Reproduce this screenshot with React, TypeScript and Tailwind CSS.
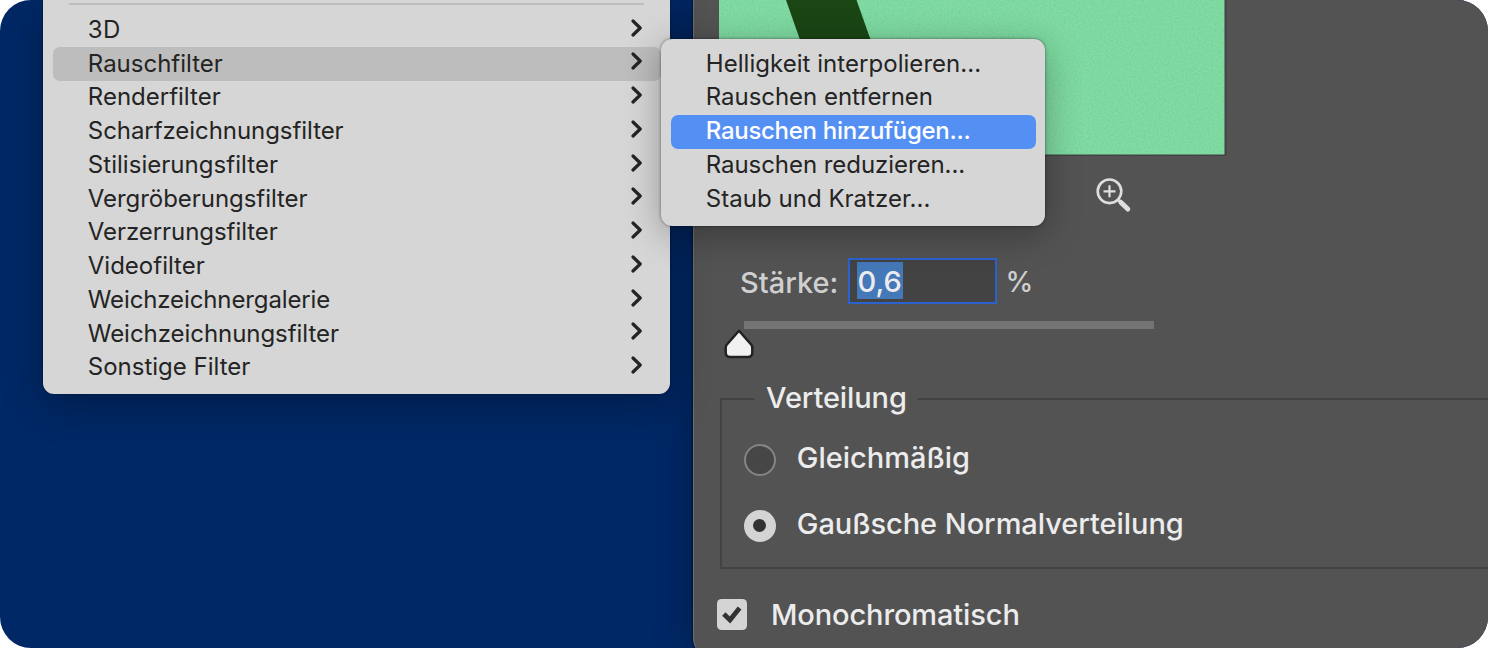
type MenuEntry = { label: string; tracking?: string };

const filterMenu: MenuEntry[] = [
  { label: "3D", tracking: "tracking-[0.4px]" },
  { label: "Rauschfilter" },
  { label: "Renderfilter" },
  { label: "Scharfzeichnungsfilter", tracking: "tracking-[-0.06px]" },
  { label: "Stilisierungsfilter", tracking: "tracking-[0.04px]" },
  { label: "Vergröberungsfilter", tracking: "tracking-[-0.05px]" },
  { label: "Verzerrungsfilter", tracking: "tracking-[-0.06px]" },
  { label: "Videofilter" },
  { label: "Weichzeichnergalerie", tracking: "tracking-[-0.12px]" },
  { label: "Weichzeichnungsfilter", tracking: "tracking-[-0.05px]" },
  { label: "Sonstige Filter" },
];

const noiseMenu: MenuEntry[] = [
  { label: "Helligkeit interpolieren...", tracking: "tracking-[0.04px]" },
  { label: "Rauschen entfernen", tracking: "tracking-[-0.04px]" },
  { label: "Rauschen hinzufügen...", tracking: "tracking-[-0.3px]" },
  { label: "Rauschen reduzieren...", tracking: "tracking-[-0.06px]" },
  { label: "Staub und Kratzer...", tracking: "tracking-[0.03px]" },
];

function Chevron() {
  return (
    <svg className="mb-[6px] h-[18px] w-[12px] shrink-0" viewBox="0 0 12 18" fill="none">
      <path d="M2 2L9.2 9L2 16" stroke="#242424" strokeWidth="3.2" strokeLinecap="round" strokeLinejoin="round" />
    </svg>
  );
}

function FilterMenu() {
  return (
    <nav className="relative z-10 h-[394px] w-[627px] shrink-0 rounded-b-[11px] bg-[#d6d6d6] px-[9.5px] pt-[3px] shadow-[0_10px_40px_rgba(0,0,0,0.3),0_0_2px_rgba(0,0,0,0.5)]">
      <div className="mx-[16.5px] h-[2px] bg-[#bebebe]" />
      <ul className="mt-[8.7px]">
        {filterMenu.map(({ label, tracking }) => (
          <li
            key={label}
            className={`flex h-[33.75px] items-center justify-between rounded-[7px] pr-[18px] pl-[35.3px] ${
              label === "Rauschfilter" ? "bg-[#bdbdbd]" : ""
            }`}
          >
            <span className={`pb-[1.4px] text-[24px] leading-none whitespace-nowrap ${tracking ?? ""}`}>{label}</span>
            <Chevron />
          </li>
        ))}
      </ul>
    </nav>
  );
}

function NoiseSubmenu() {
  return (
    <ul className="absolute top-[38.5px] left-[661px] z-20 h-[187px] w-[384px] rounded-[11px] bg-[#d6d6d6] px-[9.5px] pt-[9px] shadow-[0_8px_36px_rgba(0,0,0,0.3),0_0_3px_rgba(0,0,0,0.5)]">
      {noiseMenu.map(({ label, tracking }) => (
        <li
          key={label}
          className={`flex h-[33.75px] items-center rounded-[7px] pl-[35.3px] ${
            label === "Rauschen hinzufügen..." ? "bg-[#5490f3] font-medium text-white" : ""
          }`}
        >
          <span className={`pb-[1.4px] text-[24px] leading-none whitespace-nowrap ${tracking ?? ""}`}>{label}</span>
        </li>
      ))}
    </ul>
  );
}

function Preview() {
  return (
    <svg className="ml-[25.5px] h-[156px] w-[508px] shrink-0" viewBox="0 0 508 156">
      <defs>
        <filter id="grain" x="0" y="0" width="100%" height="100%">
          <feTurbulence type="fractalNoise" baseFrequency="0.55" numOctaves="2" seed="4" />
          <feColorMatrix values="0 0 0 0 0  0 0 0 0 0.2  0 0 0 0 0.1  0.9 0 0 0 -0.38" />
        </filter>
      </defs>
      <rect width="507.5" height="156" fill="#434343" />
      <rect width="505.5" height="154.5" fill="#81dba2" />
      <path d="M67 0H137.5L196 165H125Z" fill="#1b4513" />
      <rect width="505.5" height="154.5" filter="url(#grain)" opacity="0.25" />
    </svg>
  );
}

function ZoomIn() {
  return (
    <svg className="mt-[21px] ml-[401px] h-[36px] w-[38px] shrink-0" viewBox="0 0 38 36" fill="none" stroke="#dedede">
      <circle cx="14.5" cy="14.3" r="11.8" strokeWidth="2.6" />
      <path d="M14.5 8.3V20.3M8.5 14.3H20.5" strokeWidth="2.2" />
      <path d="M23.2 22.8L26 25.5" strokeWidth="3.5" />
      <path d="M26 25.5L32.8 32" strokeWidth="5" strokeLinecap="round" />
    </svg>
  );
}

function Slider() {
  return (
    <div className="mt-[17px] ml-[29.5px] flex h-[39px] flex-col">
      <div className="ml-[21px] h-[8px] w-[410px] shrink-0 bg-[#747474]" />
      <svg className="ml-[0.5px] h-[31px] w-[31px] shrink-0" viewBox="0 0 31 31">
        <path
          d="M15 1.7L27.3 15.8Q28.3 17 28.3 18.5V23.5Q28.3 28 23.8 28H6.2Q1.7 28 1.7 23.5V18.5Q1.7 17 2.7 15.8Z"
          fill="#f1f1f1"
          stroke="#222"
          strokeWidth="2.5"
          strokeLinejoin="round"
        />
      </svg>
    </div>
  );
}

function Distribution() {
  return (
    <section className="mt-[21px] ml-[26px] flex shrink-0 flex-col font-medium text-[#ececec]">
      <div className="flex h-[36px] items-start">
        <div className="mt-[17px] h-[19px] w-[35px] border-t-[2px] border-l-[2px] border-[#434343]" />
        <h2 className="w-[162px] pl-[11.5px] text-[29px] leading-[34px] tracking-[-0.1px] whitespace-nowrap">
          Verteilung
        </h2>
        <div className="mt-[17px] h-[2px] flex-1 bg-[#434343]" />
      </div>
      <div className="flex h-[152px] flex-col border-b-[2px] border-l-[2px] border-[#434343] pt-[26px] pl-[22px]">
        <label className="flex h-[34px] items-center">
          <span className="size-[32px] shrink-0 rounded-full border-[2px] border-[#858585] bg-[#464646]" />
          <span className="ml-[21.3px] pb-[4px] text-[29px] leading-none whitespace-nowrap">Gleichmäßig</span>
        </label>
        <label className="mt-[32px] flex h-[34px] items-center">
          <span className="flex size-[32px] shrink-0 items-center justify-center rounded-full bg-[#d4d4d4]">
            <span className="size-[13px] rounded-full bg-[#333333]" />
          </span>
          <span className="ml-[21.3px] pb-[4px] text-[29px] leading-none tracking-[-0.05px] whitespace-nowrap">
            Gaußsche Normalverteilung
          </span>
        </label>
      </div>
    </section>
  );
}

function NoiseDialog() {
  return (
    <main className="ml-[22.5px] flex h-[658px] w-[900px] shrink-0 flex-col rounded-bl-[20px] border-l border-[#707070] bg-[#535353] shadow-[0_0_40px_rgba(0,0,0,0.3),0_0_1px_1px_rgba(0,0,0,0.4)]">
      <Preview />
      <ZoomIn />
      <div className="mt-[44.5px] ml-[46.5px] flex h-[46px] shrink-0 items-center text-[29px]">
        <span className="w-[108px] pt-[3px] leading-none font-[450] text-[#cfcfcf]">Stärke:</span>
        <div className="flex h-[46px] w-[148.5px] items-center border-[2.5px] border-[#2a62d0] bg-[#434343] pl-[6.5px]">
          <span className="h-[37px] w-[46px] bg-[#4478b8] pl-px leading-[39px] font-medium text-[#ececec]">0,6</span>
        </div>
        <span className="pt-[3px] pl-[9px] text-[28px] leading-none font-[450] text-[#cfcfcf]">%</span>
      </div>
      <Slider />
      <Distribution />
      <label className="mt-[29px] ml-[23px] flex h-[34px] shrink-0 items-center font-medium text-[#ececec]">
        <span className="flex size-[30.5px] shrink-0 items-center justify-center rounded-[4.5px] bg-[#d4d4d4]">
          <svg className="mb-px size-[22px]" viewBox="0 0 22 22" fill="none">
            <path d="M2.8 11L9 17L18.6 5" stroke="#333333" strokeWidth="4.8" />
          </svg>
        </span>
        <span className="ml-[24px] text-[29px] leading-none tracking-[-0.12px] whitespace-nowrap">Monochromatisch</span>
      </label>
    </main>
  );
}

export default function App() {
  return (
    <div className="h-[648px] w-[1488px] bg-white">
      <div className="relative flex h-[648px] w-[1488px] items-start overflow-hidden rounded-[31px] bg-[#002866] pl-[43px] font-['Inter',sans-serif] text-[#242424]">
        <FilterMenu />
        <NoiseDialog />
        <NoiseSubmenu />
      </div>
    </div>
  );
}
